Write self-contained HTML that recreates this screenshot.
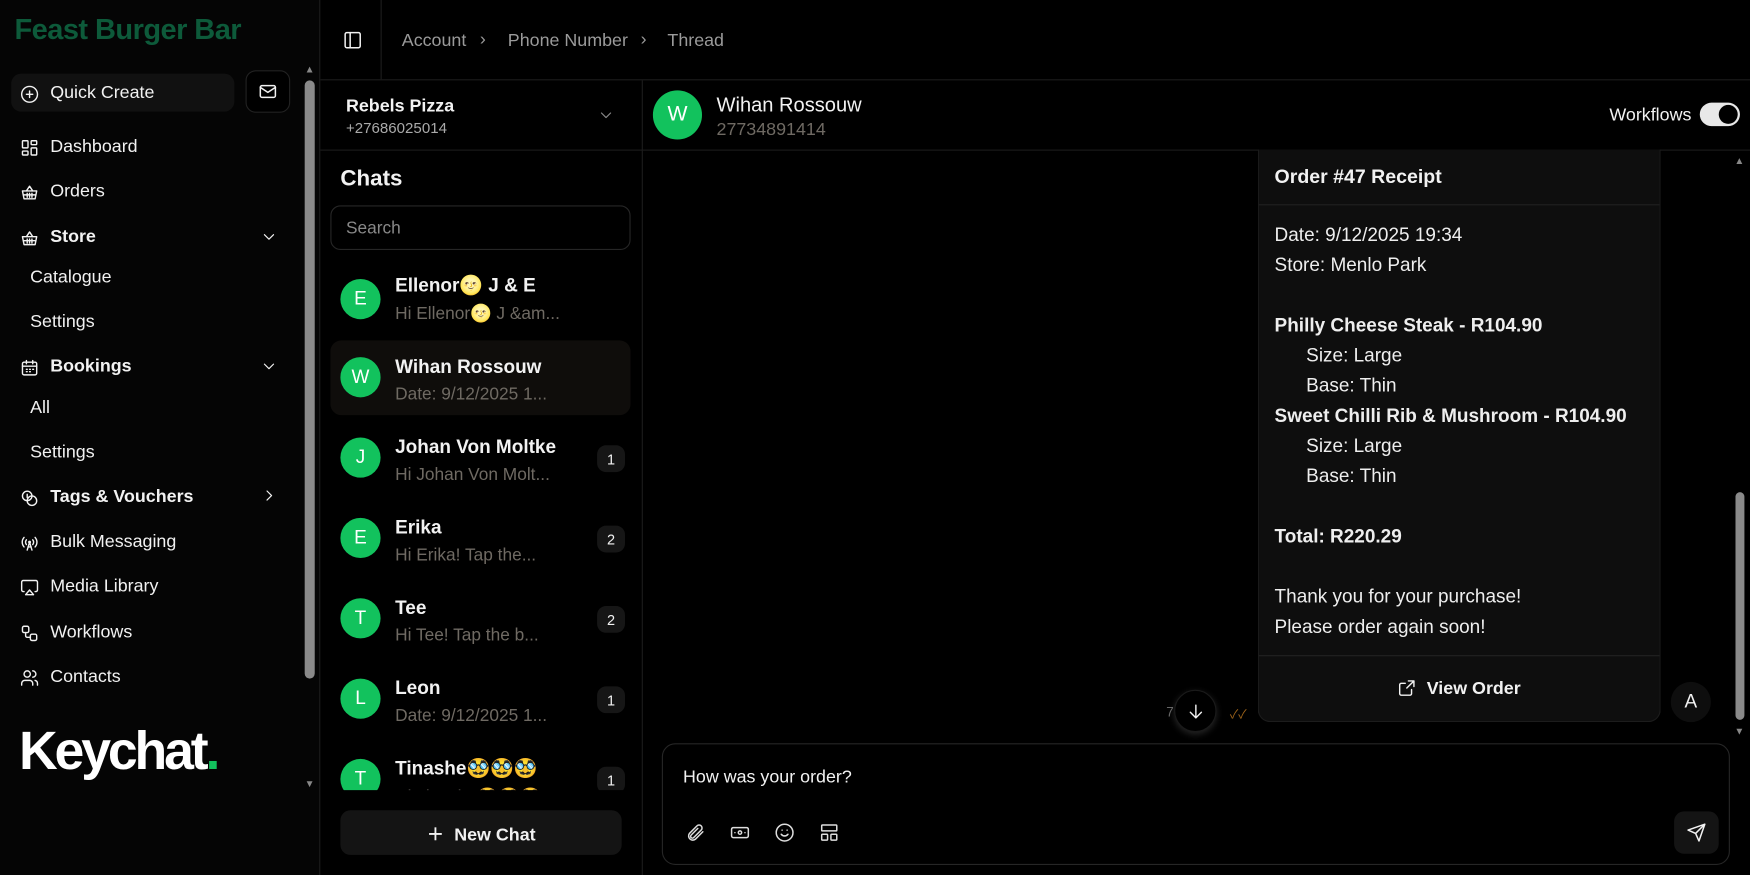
<!DOCTYPE html>
<html><head><meta charset="utf-8"><style>
*{box-sizing:border-box;margin:0;padding:0}
body{width:1750px;height:875px;background:#000;overflow:hidden;position:relative}
#w{position:absolute;left:0;top:0;width:1568px;height:784px;transform:scale(1.11607);transform-origin:0 0;color:#f2f2f2;font-family:"Liberation Sans","Noto Sans CJK SC",sans-serif;font-size:16px}
.abs{position:absolute}
svg{fill:none;stroke:currentColor;stroke-width:1.8;stroke-linecap:round;stroke-linejoin:round}
#side{left:0;top:0;width:287px;height:784px;background:#050505;border-right:1px solid #1c1c1c}
.logo{left:13px;top:11px;font-size:26px;font-weight:bold;color:#0d5a3a;letter-spacing:-0.5px}
.nav{position:absolute;left:18px;display:flex;align-items:center;gap:10px;font-size:16px}
.nav svg{width:17px;height:17px}
.sub{position:absolute;left:27px;font-size:16px}
.badge{position:absolute;right:5px;width:25px;height:24px;border-radius:8px;background:#161616;font-size:13px;display:flex;align-items:center;justify-content:center}
.av{position:absolute;width:36px;height:36px;border-radius:50%;background:#12c25d;color:#fff;display:flex;align-items:center;justify-content:center;font-size:17px}
.cn{position:absolute;left:58px;font-size:17px;font-weight:bold}
.cp{position:absolute;left:58px;font-size:15.5px;color:#6f6a63}
.row{position:absolute;left:0;width:269px;height:67px;border-radius:10px}
.rc{font-size:17px;line-height:27px;color:#eee}
</style></head><body><div id="w">
<div id="side" class="abs">
 <div class="abs logo">Feast Burger Bar</div>
 <div class="abs" style="left:10px;top:66px;width:200px;height:34px;border-radius:9px;background:#111"></div>
 <div class="nav" style="top:75px"><svg viewBox="0 0 24 24"><circle cx="12" cy="12" r="10"/><path d="M12 8v8M8 12h8"/></svg>Quick Create</div>
 <div class="abs" style="left:220px;top:63px;width:40px;height:38px;border:1px solid #222;border-radius:9px;background:#000;display:flex;align-items:center;justify-content:center"><svg viewBox="0 0 24 24" width="18" height="18"><rect x="3" y="5" width="18" height="14" rx="2"/><path d="M3 7l9 6 9-6"/></svg></div>
 <div class="nav" style="top:123px"><svg viewBox="0 0 24 24"><rect x="3" y="3" width="7" height="9" rx="1"/><rect x="14" y="3" width="7" height="5" rx="1"/><rect x="14" y="12" width="7" height="9" rx="1"/><rect x="3" y="16" width="7" height="5" rx="1"/></svg>Dashboard</div>
 <div class="nav" style="top:163px"><svg viewBox="0 0 24 24"><path d="M3 10h18l-2 10H5zM8 10l4-6 4 6M9 13v5M12 13v5M15 13v5M4 15h16"/></svg>Orders</div>
 <div class="nav" style="top:204px;font-weight:bold"><svg viewBox="0 0 24 24"><path d="M3 10h18l-2 10H5zM8 10l4-6 4 6M9 13v5M12 13v5M15 13v5M4 15h16"/></svg>Store</div>
 <svg class="abs" style="left:234px;top:205px;width:14px;height:14px" viewBox="0 0 24 24"><path d="M5 9l7 7 7-7"/></svg>
 <div class="sub" style="top:240px">Catalogue</div>
 <div class="sub" style="top:280px">Settings</div>
 <div class="nav" style="top:320px;font-weight:bold"><svg viewBox="0 0 24 24"><rect x="3" y="5" width="18" height="16" rx="2"/><path d="M8 3v4M16 3v4M3 10h18M8 14h1M12 14h1M16 14h1M8 17h1M12 17h1"/></svg>Bookings</div>
 <svg class="abs" style="left:234px;top:321px;width:14px;height:14px" viewBox="0 0 24 24"><path d="M5 9l7 7 7-7"/></svg>
 <div class="sub" style="top:357px">All</div>
 <div class="sub" style="top:397px">Settings</div>
 <div class="nav" style="top:437px;font-weight:bold"><svg viewBox="0 0 24 24"><circle cx="9" cy="9" r="6"/><circle cx="15" cy="15" r="6"/><path d="M9 7v4"/></svg>Tags &amp; Vouchers</div>
 <svg class="abs" style="left:234px;top:437px;width:14px;height:14px" viewBox="0 0 24 24"><path d="M9 5l7 7-7 7"/></svg>
 <div class="nav" style="top:477px"><svg viewBox="0 0 24 24"><path d="M5 5a9 9 0 000 12M19 5a9 9 0 010 12M8 8a5 5 0 000 6M16 8a5 5 0 010 6M12 11l-3 10M12 11l3 10M10 17h4"/><circle cx="12" cy="11" r="1"/></svg>Bulk Messaging</div>
 <div class="nav" style="top:517px"><svg viewBox="0 0 24 24"><path d="M5 17H4a2 2 0 01-2-2V5a2 2 0 012-2h16a2 2 0 012 2v10a2 2 0 01-2 2h-1M12 15l5 6H7z"/></svg>Media Library</div>
 <div class="nav" style="top:558px"><svg viewBox="0 0 24 24"><rect x="3" y="3" width="8" height="8" rx="2"/><rect x="13" y="13" width="8" height="8" rx="2"/><path d="M7 11v4a2 2 0 002 2h4"/></svg>Workflows</div>
 <div class="nav" style="top:598px"><svg viewBox="0 0 24 24"><circle cx="9" cy="7" r="4"/><path d="M2 21v-2a4 4 0 014-4h6a4 4 0 014 4v2M16 3a4 4 0 010 8M22 21v-2a4 4 0 00-3-4"/></svg>Contacts</div>
 <div class="abs" style="left:17px;top:650px;font-size:48px;font-weight:bold;letter-spacing:-2.8px;color:#fff;line-height:1">Keychat<span style="color:#12c25d">.</span></div>
 <div class="abs" style="left:273px;top:57px;font-size:9px;color:#888">▲</div>
 <div class="abs" style="left:273px;top:697px;font-size:9px;color:#888">▼</div>
 <div class="abs" style="left:273px;top:72px;width:9px;height:536px;border-radius:5px;background:#8a8a8a"></div>
</div>
<div class="abs" style="left:287px;top:71px;width:1281px;height:1px;background:#1c1c1c"></div>
<div class="abs" style="left:341px;top:0;width:1px;height:71px;background:#1c1c1c"></div>
<svg class="abs" style="left:307px;top:27px;width:18px;height:18px" viewBox="0 0 24 24"><rect x="3" y="3" width="18" height="18" rx="2"/><path d="M9 3v18"/></svg>
<div class="abs" style="left:360px;top:28px;color:#9a9a9a;font-size:16px">Account</div>
<div class="abs" style="left:430px;top:27px;color:#9a9a9a;font-size:16px">›</div>
<div class="abs" style="left:455px;top:28px;color:#9a9a9a;font-size:16px">Phone Number</div>
<div class="abs" style="left:574px;top:27px;color:#9a9a9a;font-size:16px">›</div>
<div class="abs" style="left:598px;top:28px;color:#9a9a9a;font-size:16px">Thread</div>
<div class="abs" style="left:575px;top:72px;width:1px;height:712px;background:#1c1c1c"></div>
<div class="abs" style="left:287px;top:134px;width:1281px;height:1px;background:#1c1c1c"></div>
<div class="abs" style="left:310px;top:87px;font-weight:bold;font-size:16px">Rebels Pizza</div>
<div class="abs" style="left:310px;top:107px;font-size:13.5px;color:#aaa">+27686025014</div>
<svg class="abs" style="left:536px;top:96px;width:14px;height:14px;color:#888" viewBox="0 0 24 24"><path d="M5 9l7 7 7-7"/></svg>
<div class="abs" style="left:305px;top:149px;font-size:20px;font-weight:bold">Chats</div>
<div class="abs" style="left:296px;top:184px;width:269px;height:40px;border:1px solid #262626;border-radius:9px;padding:11px 13px;color:#888;font-size:15.5px">Search</div>
<div class="abs" style="left:296px;top:233px;width:269px;height:475px;overflow:hidden">
 <div class="row" style="top:0"><div class="av" style="left:9px;top:17px">E</div><div class="cn" style="top:13px">Ellenor🌝 J &amp; E</div><div class="cp" style="top:39px">Hi Ellenor🌝 J &amp;am...</div></div>
 <div class="row" style="top:72px;background:#0f0d0b"><div class="av" style="left:9px;top:15px">W</div><div class="cn" style="top:14px">Wihan Rossouw</div><div class="cp" style="top:40px">Date: 9/12/2025 1...</div></div>
 <div class="row" style="top:144px"><div class="av" style="left:9px;top:15px">J</div><div class="cn" style="top:14px">Johan Von Moltke</div><div class="cp" style="top:40px">Hi Johan Von Molt...</div><div class="badge" style="top:22px">1</div></div>
 <div class="row" style="top:216px"><div class="av" style="left:9px;top:15px">E</div><div class="cn" style="top:14px">Erika</div><div class="cp" style="top:40px">Hi Erika! Tap the...</div><div class="badge" style="top:22px">2</div></div>
 <div class="row" style="top:288px"><div class="av" style="left:9px;top:15px">T</div><div class="cn" style="top:14px">Tee</div><div class="cp" style="top:40px">Hi Tee! Tap the b...</div><div class="badge" style="top:22px">2</div></div>
 <div class="row" style="top:360px"><div class="av" style="left:9px;top:15px">L</div><div class="cn" style="top:14px">Leon</div><div class="cp" style="top:40px">Date: 9/12/2025 1...</div><div class="badge" style="top:22px">1</div></div>
 <div class="row" style="top:432px"><div class="av" style="left:9px;top:15px">T</div><div class="cn" style="top:14px">Tinashe🥸🥸🥸</div><div class="cp" style="top:40px">Hi Tinashe🥸🥸🥸...</div><div class="badge" style="top:22px">1</div></div>
</div>
<div class="abs" style="left:305px;top:726px;width:252px;height:40px;border-radius:9px;background:#141414;display:flex;align-items:center;justify-content:center;font-weight:bold;font-size:16px">＋&nbsp; New Chat</div>
<div class="av" style="left:585px;top:81px;width:44px;height:44px;font-size:19px">W</div>
<div class="abs" style="left:642px;top:84px;font-size:18px">Wihan Rossouw</div>
<div class="abs" style="left:642px;top:108px;font-size:16px;color:#6f6a63">27734891414</div>
<div class="abs" style="left:1442px;top:95px;font-size:16px">Workflows</div>
<div class="abs" style="left:1523px;top:92px;width:36px;height:21px;border-radius:11px;background:#e8e8e8"><div style="position:absolute;right:2px;top:2px;width:17px;height:17px;border-radius:50%;background:#000"></div></div>
<div class="abs" style="left:1127px;top:134px;width:361px;height:513px;background:#0e0e0e;border:1px solid #1c1c1c;border-top:none;border-radius:0 0 11px 11px">
 <div style="position:absolute;left:14px;top:14px;font-size:17.5px;font-weight:bold">Order #47 Receipt</div>
 <div style="position:absolute;left:0;right:0;top:49px;height:1px;background:#222"></div>
 <div class="rc" style="position:absolute;left:14px;top:63px">Date: 9/12/2025 19:34<br>Store: Menlo Park<br><br><b>Philly Cheese Steak - R104.90</b><br>&nbsp;&nbsp;&nbsp;&nbsp;&nbsp;&nbsp;Size: Large<br>&nbsp;&nbsp;&nbsp;&nbsp;&nbsp;&nbsp;Base: Thin<br><b>Sweet Chilli Rib &amp; Mushroom - R104.90</b><br>&nbsp;&nbsp;&nbsp;&nbsp;&nbsp;&nbsp;Size: Large<br>&nbsp;&nbsp;&nbsp;&nbsp;&nbsp;&nbsp;Base: Thin<br><br><b>Total: R220.29</b><br><br>Thank you for your purchase!<br>Please order again soon!</div>
 <div style="position:absolute;left:0;right:0;top:453px;height:1px;background:#222"></div>
 <div style="position:absolute;left:0;right:0;top:474px;text-align:center;font-weight:bold;font-size:16px"><svg style="width:17px;height:17px;vertical-align:-3px" viewBox="0 0 24 24"><path d="M14 3h7v7M21 3l-9 9M18 14v5a2 2 0 01-2 2H5a2 2 0 01-2-2V8a2 2 0 012-2h5"/></svg>&nbsp; View Order</div>
</div>
<div class="abs" style="left:1045px;top:631px;font-size:12px;color:#666">7</div>
<div class="abs" style="left:1052px;top:618px;width:38px;height:38px;border-radius:50%;background:#000;box-shadow:0 2px 6px rgba(255,255,255,.15);border:1px solid #1a1a1a;display:flex;align-items:center;justify-content:center"><svg style="width:17px;height:17px" viewBox="0 0 24 24"><path d="M12 4v16M5 13l7 7 7-7"/></svg></div>
<div class="abs" style="left:1102px;top:632px;font-size:11px;color:#a0651a">✓✓</div>
<div class="abs" style="left:1497px;top:611px;width:36px;height:36px;border-radius:50%;background:#0e0e0e;display:flex;align-items:center;justify-content:center;font-size:17px">A</div>
<div class="abs" style="left:1554px;top:139px;font-size:9px;color:#888">▲</div>
<div class="abs" style="left:1554px;top:650px;font-size:9px;color:#888">▼</div>
<div class="abs" style="left:1555px;top:441px;width:8px;height:204px;border-radius:4px;background:#8a8a8a"></div>
<div class="abs" style="left:593px;top:666px;width:957px;height:109px;border:1px solid #262626;border-radius:12px"></div>
<div class="abs" style="left:612px;top:688px;font-size:16px">How was your order?</div>
<div class="abs" style="left:614px;top:737px;display:flex;gap:22px;color:#ddd">
<svg width="18" height="18" viewBox="0 0 24 24"><path d="M21 11l-9 9a5 5 0 01-7-7l9-9a3.5 3.5 0 015 5l-9 9a2 2 0 01-3-3l8-8"/></svg>
<svg width="18" height="18" viewBox="0 0 24 24"><rect x="2" y="6" width="20" height="12" rx="2"/><circle cx="12" cy="12" r="2"/><path d="M6 12h.01M18 12h.01"/></svg>
<svg width="18" height="18" viewBox="0 0 24 24"><circle cx="12" cy="12" r="10"/><path d="M8 14s1.5 2 4 2 4-2 4-2M9 9h.01M15 9h.01"/></svg>
<svg width="18" height="18" viewBox="0 0 24 24"><rect x="3" y="3" width="18" height="7" rx="1"/><rect x="3" y="14" width="7" height="7" rx="1"/><rect x="14" y="14" width="7" height="7" rx="1"/></svg>
</div>
<div class="abs" style="left:1500px;top:727px;width:40px;height:38px;border-radius:9px;background:#141414;display:flex;align-items:center;justify-content:center"><svg width="18" height="18" viewBox="0 0 24 24"><path d="M22 2L11 13M22 2l-7 20-4-9-9-4z"/></svg></div>
</div></body></html>
